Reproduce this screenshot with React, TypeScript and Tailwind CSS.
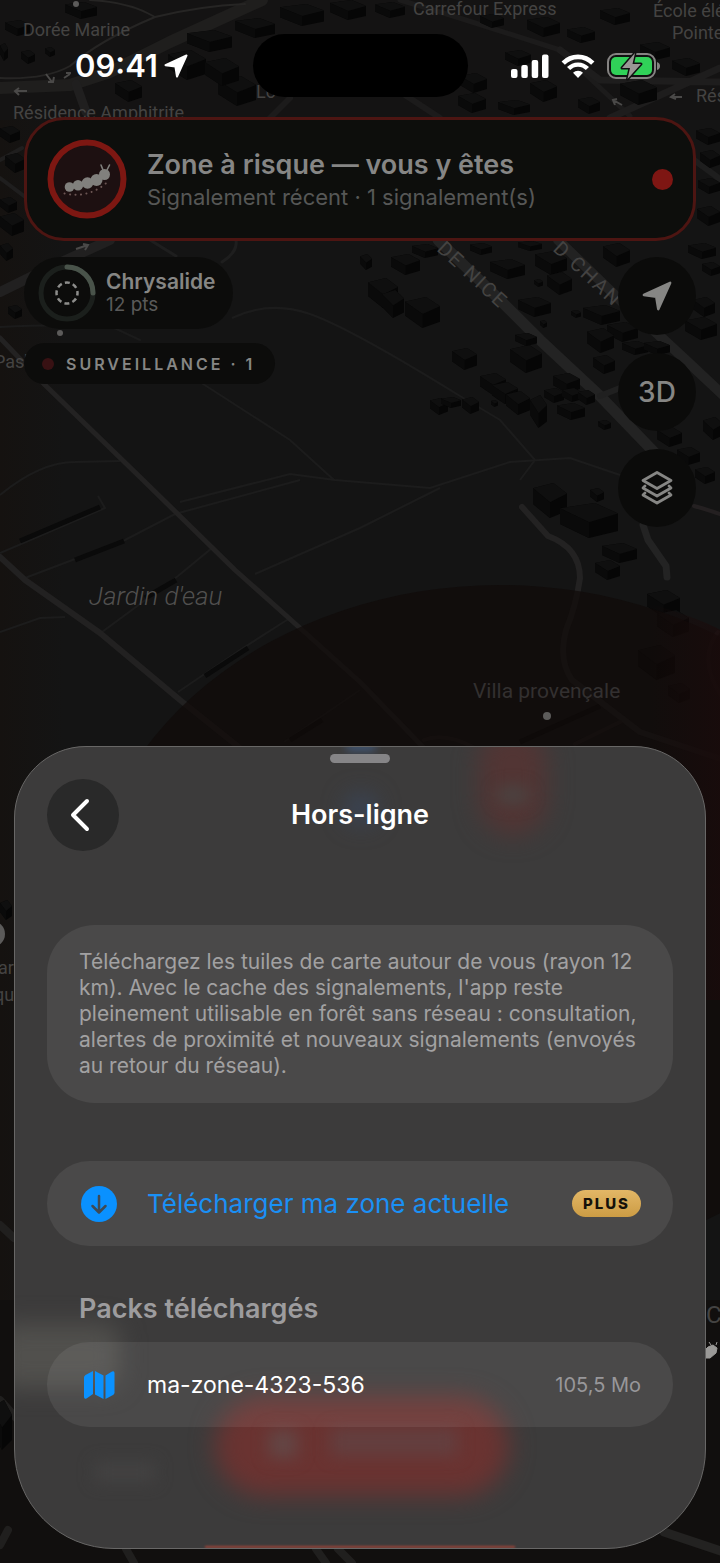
import type { ReactNode } from 'react';

// ============================================
// Map data
// ============================================

// x, y, width, height of each extruded block
const BUILDINGS: number[][] = [
  [5, 20, 25, 16], [65, 2, 32, 17], [0, 43, 8, 18], [21, 50, 14, 14], [45, 47, 10, 10], [115, 80, 27, 22],
  [168, 50, 38, 30], [187, 30, 45, 22], [218, 76, 38, 30], [235, 18, 40, 20], [280, 4, 44, 22], [330, 0, 36, 20],
  [205, 58, 34, 28], [0, 126, 20, 17], [5, 153, 20, 20], [0, 197, 17, 16], [0, 213, 24, 23], [0, 243, 13, 18], [8, 305, 14, 14],
  [375, 2, 30, 16], [527, 17, 33, 20], [567, 27, 28, 16], [600, 8, 30, 17], [460, 73, 27, 20], [530, 80, 27, 22],
  [505, 50, 26, 16], [620, 80, 37, 25], [458, 93, 28, 20], [498, 100, 32, 15], [578, 97, 22, 17], [480, 14, 24, 14],
  [640, 42, 30, 18], [672, 58, 28, 18], [696, 128, 24, 17], [700, 150, 20, 18], [698, 178, 22, 16], [697, 206, 23, 20],
  [688, 243, 28, 16], [702, 262, 18, 14], [360, 254, 12, 16], [368, 278, 30, 30], [382, 290, 22, 28], [405, 297, 35, 31],
  [391, 254, 29, 21], [412, 244, 26, 14], [470, 243, 22, 12], [490, 259, 35, 20], [518, 241, 24, 10], [535, 251, 32, 24],
  [547, 272, 25, 23], [518, 297, 33, 20], [534, 279, 9, 8], [571, 310, 10, 8], [603, 243, 27, 24], [583, 305, 37, 20],
  [607, 322, 31, 20], [587, 328, 27, 25], [593, 355, 22, 19], [622, 341, 26, 14], [644, 341, 26, 14], [510, 345, 32, 28],
  [515, 333, 22, 13], [540, 320, 7, 8], [452, 348, 25, 22], [480, 373, 26, 22], [492, 382, 26, 22], [506, 391, 24, 24],
  [530, 395, 17, 33], [553, 373, 27, 20], [544, 388, 20, 15], [562, 388, 20, 14], [557, 403, 28, 17], [578, 390, 17, 15],
  [598, 420, 13, 10], [491, 400, 7, 7], [430, 398, 18, 17], [441, 397, 20, 11], [462, 397, 17, 17], [657, 427, 25, 20],
  [703, 417, 20, 23], [677, 447, 23, 18], [695, 467, 20, 17], [693, 297, 22, 20], [685, 317, 32, 23], [533, 483, 34, 35],
  [560, 503, 58, 35], [590, 488, 14, 14], [602, 543, 35, 20], [595, 560, 25, 20], [647, 590, 33, 27], [657, 610, 32, 27],
  [638, 645, 37, 35], [668, 683, 22, 20], [0, 900, 12, 20], [-8, 1400, 20, 50],
];

interface Road {
  d: string;
  width: number;
  color: string;
}

const ROADS: Road[] = [
  { d: 'M0 88 L70 85 L110 72 L170 42 L262 0', width: 12, color: '#1f1e1d' },
  { d: 'M0 78 Q45 80 70 66 Q100 40 155 17 Q130 2 90 0', width: 2, color: '#262524' },
  { d: 'M155 17 Q200 6 245 4', width: 2, color: '#262524' },
  { d: 'M76 84 L86 112', width: 9, color: '#201f1f' },
  { d: 'M0 292 L55 265 L110 240', width: 10, color: '#212020' },
  { d: 'M0 327 Q50 324 110 326 L140 340', width: 2, color: '#1b1b1b' },
  { d: 'M150 240 L176 256 M222 262 Q238 252 236 240', width: 3, color: '#1e1e1e' },
  { d: 'M0 160 L22 148 M0 178 L24 196', width: 4, color: '#1f1e1e' },
  { d: 'M400 0 L450 15 L560 50 L630 116', width: 5, color: '#1c1b1b' },
  { d: 'M560 50 L600 80 L720 82 M610 118 L720 68', width: 7, color: '#1e1d1d' },
  { d: 'M405 95 L440 118 M290 98 L270 118', width: 6, color: '#1c1b1b' },
  { d: 'M438 240 L502 302 L540 340 L600 396 L654 452', width: 11, color: '#232323' },
  { d: 'M600 396 L620 388', width: 6, color: '#202020' },
  { d: 'M558 240 L620 300 L662 338 L690 364 L724 396', width: 10, color: '#222222' },
  { d: 'M694 160 L724 182', width: 6, color: '#1e1e1e' },
  { d: 'M0 338 L45 385 L143 480 L235 570 L300 628 L360 682 L424 748', width: 5, color: '#232222' },
  { d: 'M0 557 L25 580 L100 633 L180 700 L240 748', width: 6, color: '#222121' },
  { d: 'M522 507 L548 536 Q580 548 580 578 Q576 606 566 630 Q558 660 572 680 L606 706 L640 732 L724 760', width: 6, color: '#232222' },
  { d: 'M643 525 L648 540 L666 566 L667 577', width: 7, color: '#232323' },
  { d: 'M694 506 Q702 508 720 514 M718 632 Q696 660 724 700', width: 4, color: '#242021' },
  { d: 'M424 740 Q445 732 475 748 M575 744 L620 722', width: 4, color: '#201d1d' },
  { d: 'M0 1225 L14 1238 M0 1400 L18 1420 M0 1545 L8 1530', width: 8, color: '#201f1e' },
  { d: 'M126 1549 L134 1563 M316 1549 L326 1563 M338 1549 L352 1563', width: 8, color: '#201f1e' },
  { d: 'M664 1532 L724 1552', width: 9, color: '#232221' },
  { d: 'M706 886 L724 886', width: 4, color: '#1b1716' },
];

const PATHS = [
  'M232 318 Q270 300 310 314 T460 396 L500 420 L535 460 L520 480',
  'M200 382 L290 440 L334 480',
  'M0 495 Q40 462 75 462 L120 461',
  'M180 502 L290 474 L335 480 L430 488 L510 462 L570 458 L620 475',
  'M0 553 L105 508 L98 496',
  'M25 578 L125 540 L175 514 L300 480',
  'M102 632 L178 576 L212 548',
  'M178 692 L240 650 L290 618',
  'M255 574 L360 528 L440 488',
  'M0 632 L40 618 L65 617',
  'M284 742 L360 690',
];

const SHADOWS = [
  'M20 541 L100 507', 'M75 560 L124 541', 'M145 598 L176 580', 'M205 676 L248 648', 'M520 742 L600 706', 'M290 740 L322 720',
];

// ============================================
// Map
// ============================================

function Building({ box }: { box: number[] }) {
  const [x, y, w, h] = box;
  const point = (px: number, py: number) => `${x + px * w},${y + py * h}`;
  return (
    <g>
      <polygon
        points={[point(0, 0.15), point(0.6, 0), point(1, 0.3), point(1, 0.8), point(0.5, 1), point(0, 0.6)].join(' ')}
        fill="#060606"
      />
      <polygon points={[point(0, 0.15), point(0.6, 0), point(1, 0.3), point(0.5, 0.55)].join(' ')} fill="#0f0f0f" />
      <polygon points={[point(0, 0.15), point(0.5, 0.55), point(0.5, 1), point(0, 0.6)].join(' ')} fill="#0a0a0a" />
    </g>
  );
}

function MapBackdrop() {
  return (
    <svg
      className="absolute inset-0 h-full w-full"
      viewBox="0 0 720 1563"
      preserveAspectRatio="xMidYMin slice"
      fontFamily="Roboto, 'Noto Sans', sans-serif"
      fill="none"
      aria-hidden="true"
    >
      <defs>
        <linearGradient id="edge" x1="0" x2="1" y1="0" y2="0">
          <stop offset="0" stopColor="#151210" />
          <stop offset="1" stopColor="#141414" />
        </linearGradient>
        <linearGradient id="risk" x1="0" x2="1" y1="0" y2="0">
          <stop offset="0" stopColor="#1a0b0b" stopOpacity="0" />
          <stop offset="1" stopColor="#1a0b0b" />
        </linearGradient>
      </defs>
      <rect width="720" height="1563" fill="#141414" />
      <rect width="64" height="1563" fill="url(#edge)" />
      <rect width="720" height="120" fill="#141313" />
      <rect y="1300" width="720" height="263" fill="#110f0e" />

      {PATHS.map((d) => (
        <path key={d} d={d} stroke="#1c1c1c" strokeWidth={2} />
      ))}
      {SHADOWS.map((d) => (
        <path key={d} d={d} stroke="#0a0a0a" strokeWidth={5} />
      ))}
      {ROADS.map((road) => (
        <path key={road.d} d={road.d} stroke={road.color} strokeWidth={road.width} strokeLinejoin="round" strokeLinecap="round" />
      ))}
      {BUILDINGS.map((box, i) => (
        <Building key={i} box={box} />
      ))}

      {/* Risk area */}
      <ellipse cx="500" cy="925" rx="415" ry="340" fill="#0f0a09" opacity="0.7" />
      <path d="M650 604 Q700 618 724 632 V1000 H650 Z" fill="url(#risk)" opacity="0.8" />

      <g stroke="#4a4948" strokeWidth="2">
        <path d="M27 91 H15 M19 88 L15 91 L19 95" />
        <path d="M46 74 L52 82 M48 82 H53 L54 77 M64 78 L70 74 M66 73 H71" />
        <path d="M76 249 L88 245 M83 244 L88 245 L85 250" />
        <path d="M622 105 L613 100 M617 99 L613 100 L615 105 M682 97 H671 M675 94 L671 97 L676 99" />
      </g>

      <g fill="#444342" fontSize="18">
        <text x="23" y="36">Dorée Marine</text>
        <text x="13" y="119">Résidence Amphitrite</text>
        <text x="413" y="15">Carrefour Express</text>
        <text x="653" y="17">École élé</text>
        <text x="672" y="39">Pointe</text>
        <text x="696" y="102">Rés</text>
        <text x="256" y="98">Lo</text>
        <text x="-6" y="368">Pas'</text>
        <text x="-2" y="974">ar</text>
        <text x="-6" y="1001">qu</text>
        <text x="706" y="1323" fontSize="24">C</text>
        <text x="473" y="698" fontSize="21" fill="#333030">Villa provençale</text>
        <text x="89" y="605" fontSize="26" fontStyle="italic" fontWeight="300" fill="#51504f">Jardin d'eau</text>
        <text fontSize="20" letterSpacing="2" transform="translate(436 250) rotate(43)">DE NICE</text>
        <text fontSize="20" letterSpacing="2" transform="translate(552 250) rotate(43)">D CHAN</text>
      </g>

      <g fill="#5c5b5a">
        <circle cx="76" cy="4" r="3" />
        <circle cx="60" cy="333" r="3" />
        <circle cx="547" cy="716" r="4" />
        <circle cx="-8" cy="934" r="13" />
      </g>
      <path
        d="M702 1353 L708 1347 L713 1345 L717 1348 L716 1353 L710 1358 H703 Z M711 1345 L709 1342 M716 1345 L717 1342"
        fill="#9b9a98"
        stroke="#9b9a98"
      />
    </svg>
  );
}

// ============================================
// Icons
// ============================================

function LocationArrow({ className }: { className: string }) {
  return (
    <svg className={className} viewBox="0 0 24 24" fill="currentColor" stroke="currentColor" strokeWidth="2" strokeLinejoin="round" aria-hidden="true">
      <path d="M1.5 11.2 L22.5 1.5 L13 22.5 L11.4 12.6 Z" />
    </svg>
  );
}

function SignalIcon() {
  return (
    <svg className="h-6 w-[38px]" viewBox="0 0 38 24" fill="currentColor" aria-hidden="true">
      <rect x="0" y="15" width="6.5" height="9" rx="2" />
      <rect x="10.3" y="11" width="6.5" height="13" rx="2" />
      <rect x="20.7" y="6" width="6.5" height="18" rx="2" />
      <rect x="31" y="0.5" width="6.5" height="23.5" rx="2" />
    </svg>
  );
}

function WifiIcon() {
  return (
    <svg className="h-6 w-[34px]" viewBox="0 0 34 24" fill="none" aria-hidden="true">
      <path d="M2.2 9.2 A20.5 20.5 0 0 1 31.8 9.2" stroke="currentColor" strokeWidth="4.6" />
      <path d="M7.6 14.6 A13 13 0 0 1 26.4 14.6" stroke="currentColor" strokeWidth="4.4" />
      <path d="M12 18.8 A7 7 0 0 1 22 18.8 L17 24 Z" fill="currentColor" />
    </svg>
  );
}

function BatteryIcon() {
  return (
    <svg className="h-[30px] w-[54px]" viewBox="0 0 54 30" fill="none" aria-hidden="true">
      <rect x="1" y="3" width="47" height="24" rx="8" stroke="#858382" strokeWidth="2" fill="#101010" />
      <rect x="4" y="6" width="41" height="18" rx="5" fill="#30d158" />
      <path d="M50 11 Q53 12 53 15 Q53 18 50 19 Z" fill="#858382" />
      <path d="M28 2 L15 17 H23 L20.5 28 L34 13 H25.5 Z" stroke="#101010" strokeWidth="3" strokeLinejoin="round" />
      <path d="M28 2 L15 17 H23 L20.5 28 L34 13 H25.5 Z" fill="#9a9795" />
    </svg>
  );
}

function CaterpillarIcon() {
  return (
    <svg className="h-20 w-20" viewBox="0 0 80 80" fill="none" aria-hidden="true">
      <circle cx="40" cy="40" r="36.5" fill="#1d1011" stroke="#7d1712" strokeWidth="6" />
      <g fill="#81807d">
        <circle cx="22.5" cy="48" r="4.8" />
        <circle cx="31" cy="46.3" r="5.2" />
        <circle cx="40.5" cy="44" r="5.8" />
        <circle cx="49.5" cy="41" r="6" />
        <circle cx="57.5" cy="35.5" r="5.5" />
      </g>
      <path d="M56 31 L54 26 M60 31 L62.5 26" stroke="#81807d" strokeWidth="1.6" strokeLinecap="round" />
      <path d="M17.5 54.5 Q42 60 61 42.5" stroke="#6b5553" strokeWidth="2" strokeDasharray="0.1 5.4" strokeLinecap="round" />
    </svg>
  );
}

function LayersIcon() {
  return (
    <svg className="h-9 w-9" viewBox="0 0 36 36" fill="none" stroke="currentColor" strokeWidth="2.8" strokeLinejoin="round" strokeLinecap="round" aria-hidden="true">
      <path d="M18 2.5 L32 10.5 L18 18.5 L4 10.5 Z" />
      <path d="M6 16 L4 18 L18 26 L32 18 L30 16" />
      <path d="M6 23 L4 25 L18 33 L32 25 L30 23" />
    </svg>
  );
}

function ProgressRing() {
  return (
    <svg className="h-[58px] w-[58px]" viewBox="0 0 58 58" fill="none" aria-hidden="true">
      <circle cx="29" cy="29" r="26" stroke="#1b1f1c" strokeWidth="5" />
      <path d="M29 3 A26 26 0 0 1 55 29" stroke="#49534a" strokeWidth="5" strokeLinecap="round" />
      <circle cx="29" cy="29" r="10.5" stroke="#8d8d8b" strokeWidth="2.5" strokeDasharray="5 3.247" strokeDashoffset="2.5" />
    </svg>
  );
}

function DownloadIcon() {
  return (
    <svg className="h-10 w-10" viewBox="0 0 40 40" fill="none" aria-hidden="true">
      <circle cx="20" cy="20" r="18" fill="#0a91ff" />
      <path d="M20 12 V28 M13.5 22 L20 28.5 L26.5 22" stroke="#3f4a54" strokeWidth="2.5" strokeLinecap="round" strokeLinejoin="round" />
    </svg>
  );
}

function FoldedMapIcon() {
  return (
    <svg className="h-10 w-10" viewBox="0 0 40 40" fill="#0a91ff" aria-hidden="true">
      <path d="M14 6 V29 L7.5 33.5 Q5 34.5 5 32 V12.5 Q5 11 6.5 10 Z" />
      <path d="M16 6 L24.5 10.5 V34 L16 29.5 Z" />
      <path d="M26.5 10.5 L33 6.5 Q35.5 5.5 35.5 8 V27.5 Q35.5 29 34 30 L26.5 34 Z" />
    </svg>
  );
}

// ============================================
// Overlay parts
// ============================================

function StatusBar() {
  return (
    <header className="grid grid-cols-[1fr_auto_1fr] items-center pt-[34px] pb-5 text-white">
      <div className="flex items-center gap-1.5 pl-[75px]">
        <time className="text-[31px] leading-8 font-semibold">09:41</time>
        <LocationArrow className="h-6 w-6" />
      </div>
      <div className="h-[63px] w-[215px] rounded-full bg-black" />
      <div className="flex items-center justify-end gap-3 pr-[59px]">
        <SignalIcon />
        <WifiIcon />
        <BatteryIcon />
      </div>
    </header>
  );
}

function RiskBanner() {
  return (
    <section className="mx-6 flex items-center gap-5 rounded-[40px] border-[3px] border-[#4d1512] bg-[#0d0e0c] px-5 py-[19px]">
      <CaterpillarIcon />
      <div className="min-w-0 flex-1">
        <h2 className="text-[27px] leading-9 font-semibold text-[#868685]">Zone à risque — vous y êtes</h2>
        <p className="text-[22px] leading-7 text-[#565756]">Signalement récent · 1 signalement(s)</p>
      </div>
      <span className="h-[21px] w-[21px] rounded-full bg-[#7e1613]" />
    </section>
  );
}

function MapButton({ label, children }: { label: string; children: ReactNode }) {
  return (
    <button
      type="button"
      aria-label={label}
      className="flex h-[78px] w-[78px] items-center justify-center rounded-full bg-[#0b0b0a] text-[28px] font-medium text-[#868684]"
    >
      {children}
    </button>
  );
}

function InsetRow({ children }: { children: ReactNode }) {
  return <div className="flex h-[85px] w-full items-center rounded-full bg-white/[0.07] px-8">{children}</div>;
}

// ============================================
// Offline Sheet
// ============================================

function OfflineSheet() {
  return (
    <main className="relative mx-3.5 mt-auto mb-3.5 overflow-hidden rounded-t-[72px] rounded-b-[100px] border border-[#686766] bg-[#3c3b3b]">
      {/* Map pin, position dot and report button seen through the glass */}
      <div className="pointer-events-none absolute inset-0" aria-hidden="true">
        <div className="absolute -top-5 left-[464px] h-[108px] w-[68px] rounded-full bg-[#523534] blur-md" />
        <div className="absolute top-10 left-[482px] h-4 w-8 rounded-full bg-[#4a4543] blur-sm" />
        <div className="absolute top-12 left-[332px] h-7 w-7 rounded-full bg-[#39475e] blur-md" />
        <div className="absolute -top-1 left-[332px] h-2 w-7 bg-[#40587a] blur-xs" />
        <div className="absolute bottom-[160px] -left-5 h-16 w-[125px] rounded-2xl bg-[#51504d] blur-md" />
        <div className="absolute bottom-[52px] left-[200px] h-[100px] w-[294px] rounded-full bg-[#6a3331] blur-md" />
        <div className="absolute bottom-[90px] left-[254px] h-7 w-7 bg-[#634645] blur-sm" />
        <div className="absolute bottom-[92px] left-[316px] h-7 w-[126px] bg-[#633f3f] blur-sm" />
        <div className="absolute bottom-[66px] left-20 h-5 w-[60px] bg-[#434242] blur-sm" />
        <div className="absolute bottom-0 left-[190px] h-0.5 w-[310px] bg-[#a04438] blur-[1px]" />
      </div>

      <div className="relative px-8 pt-[7px] pb-[121px]">
        <div className="mx-auto h-[9px] w-[60px] rounded-full bg-[#868587]" />

        <div className="mt-4 grid grid-cols-[72px_1fr_72px] items-center">
          <button type="button" aria-label="Retour" className="flex h-[72px] w-[72px] items-center justify-center rounded-full bg-[#292929] text-white">
            <svg className="h-9 w-9" viewBox="0 0 36 36" fill="none" stroke="currentColor" strokeWidth="4" strokeLinecap="round" strokeLinejoin="round" aria-hidden="true">
              <path d="M22 4 L8 18 L22 32" />
            </svg>
          </button>
          <h1 className="text-center text-[27px] leading-9 font-semibold text-white">Hors-ligne</h1>
        </div>

        <p className="mt-[74px] rounded-[48px] bg-white/[0.07] px-8 py-6 text-[21px] leading-[26px] text-[#a2a1a2]">
          Téléchargez les tuiles de carte autour de vous (rayon 12 km). Avec le cache des signalements, l'app reste
          pleinement utilisable en forêt sans réseau : consultation, alertes de proximité et nouveaux signalements (envoyés
          au retour du réseau).
        </p>

        <button type="button" className="mt-[58px] block w-full text-left">
          <InsetRow>
            <DownloadIcon />
            <span className="ml-7 flex-1 text-[26px] leading-9 text-[#1a90f5]">Télécharger ma zone actuelle</span>
            <span className="rounded-full bg-linear-to-b from-[#e3b766] to-[#cc9c44] px-[11px] text-[15px] leading-[27px] font-extrabold tracking-[2px] text-[#15110a]">
              PLUS
            </span>
          </InsetRow>
        </button>

        <h2 className="mt-[45px] mb-[15px] px-8 text-[27px] leading-9 font-semibold text-[#9d9c9e]">Packs téléchargés</h2>

        <InsetRow>
          <FoldedMapIcon />
          <span className="ml-7 flex-1 text-[23px] leading-8 text-white">ma-zone-4323-536</span>
          <span className="text-[20px] leading-8 text-[#98979a]">105,5 Mo</span>
        </InsetRow>
      </div>
    </main>
  );
}

// ============================================
// App
// ============================================

export default function App() {
  return (
    <div className="relative flex min-h-screen flex-col overflow-hidden bg-[#141414] font-['Inter','Liberation_Sans',sans-serif]">
      <MapBackdrop />

      <div className="relative flex flex-1 flex-col">
        <StatusBar />
        <RiskBanner />

        <div className="mx-6 mt-4 flex items-start justify-between">
          <div className="flex flex-col items-start gap-3.5">
            <div className="flex h-[72px] items-center gap-2.5 rounded-full bg-[#0c0c0b] pr-[18px] pl-3.5">
              <ProgressRing />
              <div>
                <p className="text-[21px] leading-6 font-semibold text-[#868684]">Chrysalide</p>
                <p className="text-[19px] leading-[22px] text-[#5a5a59]">12 pts</p>
              </div>
            </div>
            <div className="flex h-[41px] items-center gap-3 rounded-full bg-[#0c0c0b] pr-5 pl-[18px]">
              <span className="h-3 w-3 rounded-full bg-[#381113]" />
              <span className="text-[16px] leading-6 font-semibold tracking-[3px] text-[#868684]">SURVEILLANCE · 1</span>
            </div>
          </div>

          <div className="flex flex-col gap-[18px]">
            <MapButton label="Ma position">
              <LocationArrow className="h-[30px] w-[30px]" />
            </MapButton>
            <MapButton label="Vue 3D">3D</MapButton>
            <MapButton label="Calques">
              <LayersIcon />
            </MapButton>
          </div>
        </div>

        <OfflineSheet />
      </div>
    </div>
  );
}
